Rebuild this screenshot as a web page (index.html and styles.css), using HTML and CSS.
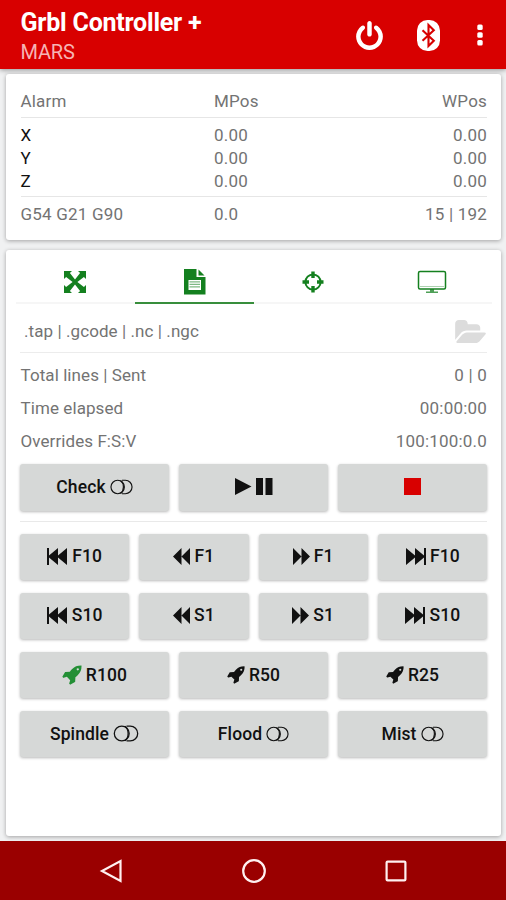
FILE: index.html
```html
<!DOCTYPE html>
<html lang="en">
<head>
<meta charset="utf-8">
<title>Grbl Controller +</title>
<link rel="stylesheet" href="styles.css">
</head>
<body>
<svg class="defs" aria-hidden="true">
  <symbol id="toggle" viewBox="0 0 24 16"><g fill="none" stroke="currentColor" stroke-width="1.200"><circle cx="8" cy="8" r="7"/><path d="M11 1.200q3 2.300 3 6.800t-3 6.800M12.500 1H16a7 7 0 0 1 0 14h-3.500"/></g></symbol>
  <symbol id="back" viewBox="0 0 17 17"><path d="M8.500 0v17L0 8.500zM17 0v17L8.500 8.500z"/></symbol>
  <symbol id="first" viewBox="0 0 21 17"><path d="M0 0h2v7.500L11 0v7.500L20 0v17l-9-7.500V17L2 9.500V17H0z"/></symbol>
  <symbol id="rocket" viewBox="0 0 1700 1792"><path d="M1440 448q0-40-28-68t-68-28-68 28-28 68 28 68 68 28 68-28 28-68zm224-288q0 249-75.500 430.500t-253.500 360.500q-81 80-195 176l-20 379q-2 16-16 26l-384 224q-7 4-16 4-12 0-23-9l-64-64q-13-14-8-32l85-276-281-281-276 85q-3 1-9 1-14 0-23-9l-64-64q-17-19-5-39l224-384q10-14 26-16l379-20q96-114 176-195 188-187 358-258t431-71q14 0 24 9.500t10 22.500z"/></symbol>
</svg>
<header class="appbar">
  <div class="titles"><h1>Grbl Controller +</h1><p>MARS</p></div>
  <svg class="power" viewBox="128 0 1536 1664"><path d="M1664 896q0 156-61 298t-164 245-245 164-298 61-298-61-245-164-164-245-61-298q0-182 80.500-343t226.500-270q43-32 95.500-25t83.500 50q32 42 24.500 94.500t-49.500 84.500q-98 74-151.500 181t-53.500 228q0 104 40.500 198.500t109.500 163.500 163.500 109.500 198.500 40.500 198.500-40.500 163.500-109.500 109.500-163.500 40.500-198.500q0-121-53.500-228t-151.500-181q-42-32-49.500-84.500t24.500-94.500q31-43 84-50t95 25q146 109 226.500 270t80.500 343zm-640-768v640q0 52-38 90t-90 38-90-38-38-90v-640q0-52 38-90t90-38 90 38 38 90z"/></svg>
  <svg class="bluetooth" viewBox="0 0 23 31"><rect width="23" height="31" rx="10.500"/><path d="M5.500 10.200 16.800 20.800 11.500 26V5l5.300 5.200L5.500 20.800" fill="none" stroke="#d80000" stroke-width="2.100"/></svg>
  <svg class="more" viewBox="0 0 6 22"><rect x=".3" y="0.500" width="5.400" height="5.400" rx="1.500"/><rect x=".3" y="8.300" width="5.400" height="5.400" rx="1.500"/><rect x=".3" y="16" width="5.400" height="5.400" rx="1.500"/></svg>
</header>
<main>
  <section class="card status">
    <div class="row head"><span>Alarm</span><span>MPos</span><span>WPos</span></div>
    <div class="axes">
      <div class="row"><b>X</b><span>0.00</span><span>0.00</span></div>
      <div class="row"><b>Y</b><span>0.00</span><span>0.00</span></div>
      <div class="row"><b>Z</b><span>0.00</span><span>0.00</span></div>
    </div>
    <div class="row foot"><span>G54 G21 G90</span><span>0.0</span><span>15 | 192</span></div>
  </section>
  <section class="card job">
    <nav class="tabs">
      <div class="tab"><svg width="24" height="24" viewBox="0 0 24 24"><path d="M1 1h8L6.900 3.100 12 9.600l5.100-6.500L15 1h8v8l-2.100-2.100L14.400 12l6.500 5.100L23 15v8h-8l2.100-2.100-5.100-6.500-5.100 6.500L9 23H1v-8l2.100 2.100L9.600 12 3.100 6.900 1 9z"/></svg></div>
      <div class="tab active"><svg width="24" height="28" viewBox="0 0 24 28"><path fill-rule="evenodd" d="M2 1h12.500v8H23.500v17.500H2zM6.500 12v10h12.500V12z"/><path d="M16.500 1.500 22.500 7.500h-6z"/><path d="M7.500 13.200h10.500v1.300H7.500zm0 2.500h10.500V17H7.500zm0 2.500h10.500v1.300H7.500z" opacity=".55"/></svg></div>
      <div class="tab"><svg width="24" height="24" viewBox="0 0 24 24"><circle cx="12" cy="12" r="7.600" fill="none" stroke="currentColor" stroke-width="2"/><path d="M10.300 1.500h3.400v6.500h-3.400zM10.300 16h3.400v6.500h-3.400zM1.500 10.300h6.500v3.400H1.500zM16 10.300h6.500v3.400H16z"/></svg></div>
      <div class="tab"><svg width="30" height="26" viewBox="0 0 30 26"><rect x="1.500" y="2.500" width="27" height="17.500" rx="1.500" fill="none" stroke="currentColor" stroke-width="1.500"/><path d="M3 17.500h24" stroke="currentColor" stroke-width=".7" opacity=".5"/><path d="M13 20h4v2.500h4V24H9v-1.500h4z" opacity=".75"/></svg></div>
    </nav>
    <div class="body">
      <div class="file"><span class="label">.tap | .gcode | .nc | .ngc</span>
        <svg viewBox="0 128 1880 1408"><path d="M1879 952q0 31-31 66l-336 396q-43 51-120.500 86.500t-143.500 35.500h-1088q-34 0-60.500-13t-26.500-43q0-31 31-66l336-396q43-51 120.500-86.500t143.500-35.500h1088q34 0 60.500 13t26.500 43zm-343-344v160h-832q-94 0-197 47.500t-164 119.500l-337 396-5 6q0-4-.5-12.500t-.5-12.500v-960q0-92 66-158t158-66h320q92 0 158 66t66 158v32h544q92 0 158 66t66 158z"/></svg>
      </div>
      <div class="facts">
        <div><span class="label">Total lines | Sent</span><span>0 | 0</span></div>
        <div><span class="label">Time elapsed</span><span>00:00:00</span></div>
        <div><span class="label">Overrides F:S:V</span><span>100:100:0.0</span></div>
      </div>
      <div class="buttons three run">
        <button>Check <svg class="toggle"><use href="#toggle"/></svg></button>
        <button><svg class="playpause" viewBox="0 0 38 17"><path d="M0 0 16.500 8.500 0 17zM21 0h7v17h-7zM30.500 0h7v17h-7z"/></svg></button>
        <button><span class="stop"></span></button>
      </div>
      <div class="buttons four">
        <button><svg class="first"><use href="#first"/></svg>F10</button>
        <button><svg class="seek"><use href="#back"/></svg>F1</button>
        <button><svg class="seek flip"><use href="#back"/></svg>F1</button>
        <button><svg class="first flip"><use href="#first"/></svg>F10</button>
        <button><svg class="first"><use href="#first"/></svg>S10</button>
        <button><svg class="seek"><use href="#back"/></svg>S1</button>
        <button><svg class="seek flip"><use href="#back"/></svg>S1</button>
        <button><svg class="first flip"><use href="#first"/></svg>S10</button>
      </div>
      <div class="buttons three">
        <button><svg class="rocket on"><use href="#rocket"/></svg>R100</button>
        <button><svg class="rocket"><use href="#rocket"/></svg>R50</button>
        <button><svg class="rocket"><use href="#rocket"/></svg>R25</button>
        <button>Spindle <svg class="toggle big"><use href="#toggle"/></svg></button>
        <button>Flood <svg class="toggle"><use href="#toggle"/></svg></button>
        <button>Mist <svg class="toggle"><use href="#toggle"/></svg></button>
      </div>
    </div>
  </section>
</main>
<footer class="navbar">
  <svg viewBox="0 0 26 26"><path d="M21.500 3v20L3 13z"/></svg>
  <svg viewBox="0 0 26 26"><circle cx="13" cy="13" r="10.800"/></svg>
  <svg viewBox="0 0 26 26"><rect x="3.600" y="3.600" width="18.800" height="18.800" rx="1"/></svg>
</footer>
</body>
</html>
```
FILE: styles.css
```css
* { box-sizing: border-box; }
body {
  margin: 0;
  width: 506px;
  height: 900px;
  display: flex;
  flex-direction: column;
  overflow: hidden;
  background: #f0f1f2;
  color: #737373;
  font: 17px/23px Roboto, sans-serif;
  letter-spacing: .2px;
}
svg { display: block; fill: currentColor; }
.defs { position: absolute; width: 0; height: 0; }

.appbar {
  height: 69px;
  flex: none;
  display: flex;
  align-items: center;
  padding: 1px 23px 0 20.500px;
  background: #d80000;
  color: #fff;
  box-shadow: 0 1px 5px rgba(0, 0, 0, .4);
}
.titles { flex: 1; padding-top: 3px; }
.titles h1 { margin: 0; font-size: 25px; line-height: 30px; font-weight: 700; letter-spacing: -.22px; }
.titles p { margin: 0; font-size: 20px; line-height: 28px; color: #f6b4b4; letter-spacing: -.2px; }
.power { width: 27px; height: 29px; margin-right: 34px; }
.bluetooth { width: 23px; height: 31px; margin-right: 37px; }
.more { width: 6px; height: 22px; }

main {
  flex: 1;
  display: flex;
  flex-direction: column;
  gap: 10px;
  padding: 5px 5px 5px 6px;
}
.card {
  background: #fff;
  border-radius: 3px;
  box-shadow: 0 1px 4px rgba(0, 0, 0, .33);
}
.status { height: 166px; padding: 12px 14px 0 14.500px; }
.row { display: grid; grid-template-columns: 193.500px 1fr 1fr; }
.row > :last-child { text-align: right; }
.row b { font-weight: 400; color: #111; }
.head { height: 32px; padding-top: 4px; border-bottom: 1px solid #e6e6e6; }
.axes { height: 79px; padding-top: 6px; border-bottom: 1px solid #e6e6e6; }
.foot { padding-top: 6px; }

.job { flex: 1; }
.tabs { display: flex; height: 54px; margin: 0 9px 0 10px; border-bottom: 2px solid #f6f6f6; }
.tab {
  flex: 1;
  height: 54px;
  display: flex;
  align-items: center;
  justify-content: center;
  padding: 11px 2px 0 0;
  border-bottom: 2px solid transparent;
  color: #14801f;
}
.active { border-color: #388e3c; }
.body { padding: 0 14px; }
.file { height: 49px; display: flex; justify-content: space-between; align-items: center; padding: 6px 1px 0 4px; border-bottom: 1px solid #ececec; }
.file svg { width: 31px; height: 23px; fill: #dcdcdc; }
.label { letter-spacing: .08px; }
.facts { padding-top: 6px; }
.facts div { height: 33px; display: flex; justify-content: space-between; align-items: center; }
.facts .label { padding-left: .5px; }

.buttons { display: grid; gap: 12.500px 10px; margin-bottom: 12.500px; }
.three { grid-template-columns: repeat(3, 1fr); }
.four { grid-template-columns: repeat(4, 1fr); }
.run { margin-top: 6px; padding-bottom: 10.500px; margin-bottom: 11.500px; border-bottom: 1px solid #e9e9e9; }
button {
  height: 46.600px;
  display: flex;
  align-items: center;
  justify-content: center;
  padding: 0 0 1px;
  gap: 4px;
  border: 0;
  border-radius: 3px;
  background: #d6d8d7;
  box-shadow: 0 1px 3px rgba(0, 0, 0, .28);
  color: #111;
  font: 500 17.500px/22px Roboto, sans-serif;
  letter-spacing: .1px;
}
.toggle { width: 23px; height: 16px; }
.big { width: 26px; height: 17px; }
.playpause { width: 38px; height: 17px; }
.stop { width: 17px; height: 17px; background: #d80000; }
.first { width: 21px; height: 17px; }
.seek { width: 17px; height: 17px; }
.flip { transform: scaleX(-1); }
.rocket { width: 18px; height: 19px; }
.on { width: 20px; height: 21px; color: #238f35; }

.navbar {
  height: 59px;
  flex: none;
  display: flex;
  justify-content: center;
  align-items: center;
  gap: 116px;
  padding-left: 2px;
  background: #9a0000;
}
.navbar svg { width: 26px; height: 26px; fill: none; stroke: #fff0f0; stroke-width: 2.200; }
```
